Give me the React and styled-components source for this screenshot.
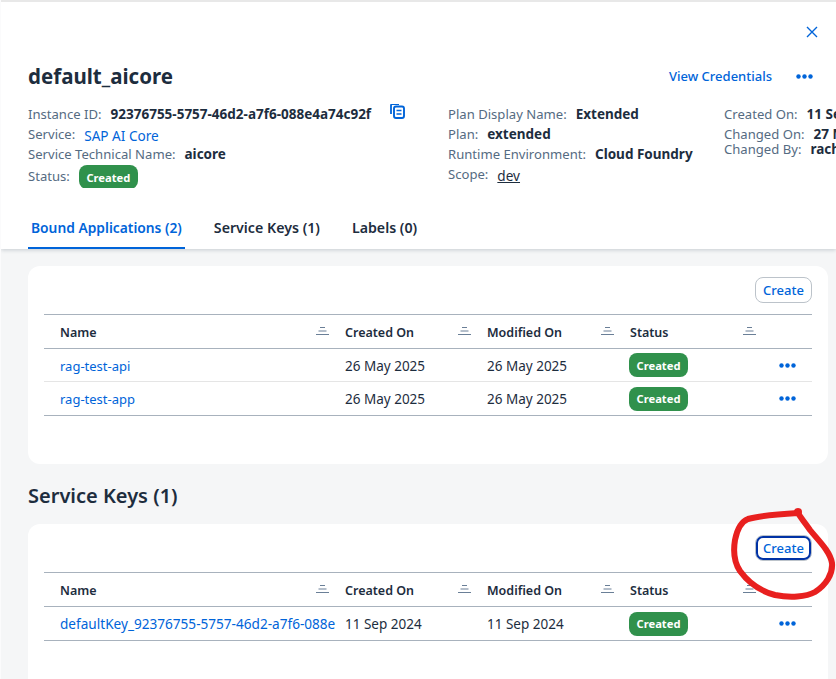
import React from "react"
import styled, { createGlobalStyle } from "styled-components"

const GlobalStyle = createGlobalStyle`
  html, body {
    margin: 0;
    padding: 0;
    background: #f5f6f7;
  }
  body {
    font-family: "Noto Sans", "Open Sans", Arial, sans-serif;
    color: #1d2d3e;
  }
`

const Page = styled.div`
  position: relative;
  width: 836px;
  height: 679px;
  overflow: hidden;
  background: #f5f6f7;
  box-sizing: border-box;
  border-left: 1px solid #fbfbfc;
`

const Header = styled.header`
  height: 249px;
  box-sizing: border-box;
  background: #fff;
  border-top: 2px solid #e8e8e8;
  box-shadow: 0 1px 4px rgba(34, 53, 72, 0.22);
  padding: 0 0 0 27px;
  display: flex;
  flex-direction: column;
`

const CloseRow = styled.div`
  height: 59px;
  padding: 24px 18px 0 0;
  box-sizing: border-box;
  display: flex;
  justify-content: flex-end;
`

const TitleRow = styled.div`
  display: flex;
  align-items: center;
  justify-content: space-between;
  height: 30px;
  padding-right: 23px;
`

const Title = styled.h1`
  margin: 0;
  font-size: 20.5px;
  font-weight: 700;
  color: #1d2d3e;
`

const TitleActions = styled.div`
  display: flex;
  align-items: center;
  gap: 24px;
`

const LinkButton = styled.a`
  font-size: 13px;
  font-weight: 500;
  color: #0064d9;
`

const MetaGrid = styled.div`
  display: grid;
  grid-template-columns: 420px 276px 1fr;
  margin-top: 13px;
  white-space: nowrap;
  overflow: hidden;
`

const MetaColumn = styled.div`
  display: flex;
  flex-direction: column;
`

const MetaRow = styled.div`
  height: ${p => p.$height || 20}px;
  display: flex;
  align-items: center;
  gap: ${p => p.$gap || 9}px;
  font-size: 13.1px;
`

const Label = styled.span`
  color: #556b82;
`

const Value = styled.span`
  color: #1d2d3e;
  font-weight: 700;
  font-size: 13.5px;
`

const MetaLink = styled.a`
  color: ${p => (p.$plain ? "#1d2d3e" : "#0064d9")};
  text-decoration: ${p => (p.$plain ? "underline" : "none")};
  font-size: 13.6px;
  padding-top: 3px;
`

const StatusPill = styled.span`
  display: inline-flex;
  align-items: center;
  justify-content: center;
  box-sizing: border-box;
  width: 59px;
  height: 24px;
  margin-top: ${p => p.$offset || 0}px;
  border-radius: 8px;
  background: #30914c;
  color: #fff;
  font-size: 11.2px;
  font-weight: 700;
`

const CopyButton = styled.span`
  display: inline-flex;
  margin-left: 10px;
  margin-top: -7px;
`

const Tabs = styled.nav`
  display: flex;
  margin-top: auto;
`

const Tab = styled.div`
  height: 43px;
  box-sizing: border-box;
  padding: 12px 3px 0;
  margin-right: 26px;
  font-size: ${p => (p.$active ? 13.8 : 14.2)}px;
  font-weight: 600;
  color: ${p => (p.$active ? "#0064d9" : "#1d2d3e")};
  border-bottom: 2px solid ${p => (p.$active ? "#0064d9" : "transparent")};
`

const Content = styled.main`
  padding: 17px 8px 0 27px;
`

const Card = styled.section`
  background: #fff;
  border-radius: 12px;
  padding: 11px 16px 0;
  height: ${p => p.$height}px;
  box-sizing: border-box;
`

const CardBar = styled.div`
  display: flex;
  justify-content: flex-end;
  height: 37px;
`

const CreateButton = styled.button`
  width: 57px;
  height: 26px;
  padding: 0;
  box-sizing: border-box;
  background: #fff;
  color: #0064d9;
  font: 500 13px "Noto Sans", sans-serif;
  border: 1px solid #bcc3ca;
  border-radius: 8px;
  ${p =>
    p.$focused &&
    `
    outline: 2px solid #0032a5;
    outline-offset: -3px;
  `}
`

const Row = styled.div`
  display: grid;
  grid-template-columns: 293px 142px 143px 142px 48px;
  align-items: center;
  height: ${p => (p.$head ? 35 : p.$line ? 33 : 34)}px;
  box-sizing: border-box;
  border-bottom: 1px solid ${p => (p.$line ? "#e5e5e5" : "#a8b2bd")};
  ${p => p.$head && "border-top: 1px solid #a8b2bd;"}
`

const HeadCell = styled.div`
  display: flex;
  align-items: center;
  justify-content: space-between;
  padding: 0 8px 0 16px;
  font-size: 12.5px;
  font-weight: 600;
  color: #1d2d3e;
`

const Cell = styled.div`
  padding-left: ${p => (p.$first ? 16 : 8)}px;
  font-size: ${p => (p.$first ? 13 : 13.5)}px;
  color: #1d2d3e;
  white-space: nowrap;
  overflow: hidden;
`

const TextCell = styled(Cell)`
  padding-top: ${p => (p.$line ? 2 : 0)}px;
`

const PillCell = styled.div`
  display: flex;
  padding-left: 7px;
`

const HeadName = styled.span`
  margin-left: ${p => (p.$first ? 0 : -8)}px;
  padding-top: 1px;
`

const NameLink = styled.a`
  color: #0064d9;
  font-size: ${p => (p.$long ? 13.6 : 13)}px;
`

const ActionCell = styled.div`
  display: flex;
  justify-content: center;
  padding-right: 1px;
`

const SectionTitle = styled.h2`
  margin: 20px 0 16px;
  height: 24px;
  line-height: 24px;
  font-size: 20px;
  font-weight: 600;
  color: #1d2d3e;
`

const Scribble = styled.svg`
  position: absolute;
  left: -1px;
  top: 0;
  pointer-events: none;
`

const SortIcon = () => (
  <svg width="13" height="9" viewBox="0 0 13 9">
    <path d="M4 .5h5M2.5 4h8M0 7.5h13" stroke="#6a7f97" strokeWidth="1" fill="none" />
  </svg>
)

const Dots = () => (
  <svg width="17" height="5" viewBox="0 0 17 5">
    <circle cx="2.5" cy="2.5" r="2.2" fill="#0064d9" />
    <circle cx="8.5" cy="2.5" r="2.2" fill="#0064d9" />
    <circle cx="14.5" cy="2.5" r="2.2" fill="#0064d9" />
  </svg>
)

const CloseIcon = () => (
  <svg width="12" height="12" viewBox="0 0 12 12">
    <path d="M1 1l10 10M11 1L1 11" stroke="#0064d9" strokeWidth="1.4" fill="none" />
  </svg>
)

const CopyIcon = () => (
  <svg width="15" height="16" viewBox="0 0 15 16" fill="none" stroke="#0064d9">
    <path d="M1 11V2.5Q1 1 2.5 1H9" strokeWidth="1.8" />
    <rect x="4" y="3.5" width="10" height="11.5" rx="2" strokeWidth="1.9" />
    <path d="M6.5 7.5h5M6.5 11h5" strokeWidth="1.7" />
  </svg>
)

const TableHead = () => (
  <Row $head>
    {["Name", "Created On", "Modified On", "Status"].map((name, i) => (
      <HeadCell key={name}>
        <HeadName $first={i === 0}>{name}</HeadName>
        <SortIcon />
      </HeadCell>
    ))}
    <div />
  </Row>
)

const TableRow = ({ name, created, modified, line, long }) => (
  <Row $line={line}>
    <TextCell $first $line={line}>
      <NameLink $long={long}>{name}</NameLink>
    </TextCell>
    <TextCell $line={line}>{created}</TextCell>
    <TextCell $line={line}>{modified}</TextCell>
    <PillCell>
      <StatusPill>Created</StatusPill>
    </PillCell>
    <ActionCell>
      <Dots />
    </ActionCell>
  </Row>
)

const App = () => {
  return (
    <Page>
      <GlobalStyle />
      <Header>
        <CloseRow>
          <CloseIcon />
        </CloseRow>
        <TitleRow>
          <Title>default_aicore</Title>
          <TitleActions>
            <LinkButton>View Credentials</LinkButton>
            <Dots />
          </TitleActions>
        </TitleRow>
        <MetaGrid>
          <MetaColumn>
            <MetaRow>
              <Label>Instance ID:</Label>
              <Value>92376755-5757-46d2-a7f6-088e4a74c92f</Value>
              <CopyButton>
                <CopyIcon />
              </CopyButton>
            </MetaRow>
            <MetaRow>
              <Label>Service:</Label>
              <MetaLink>SAP AI Core</MetaLink>
            </MetaRow>
            <MetaRow>
              <Label>Service Technical Name:</Label>
              <Value>aicore</Value>
            </MetaRow>
            <MetaRow $height={24}>
              <Label>Status:</Label>
              <StatusPill $offset={2}>Created</StatusPill>
            </MetaRow>
          </MetaColumn>
          <MetaColumn>
            <MetaRow>
              <Label>Plan Display Name:</Label>
              <Value>Extended</Value>
            </MetaRow>
            <MetaRow>
              <Label>Plan:</Label>
              <Value>extended</Value>
            </MetaRow>
            <MetaRow>
              <Label>Runtime Environment:</Label>
              <Value>Cloud Foundry</Value>
            </MetaRow>
            <MetaRow>
              <Label>Scope:</Label>
              <MetaLink $plain>dev</MetaLink>
            </MetaRow>
          </MetaColumn>
          <MetaColumn>
            <MetaRow>
              <Label>Created On:</Label>
              <Value>11 Sep 2024</Value>
            </MetaRow>
            <MetaRow>
              <Label>Changed On:</Label>
              <Value>27 May 2025</Value>
            </MetaRow>
            <MetaRow $height={10}>
              <Label>Changed By:</Label>
              <Value>rachel</Value>
            </MetaRow>
          </MetaColumn>
        </MetaGrid>
        <Tabs>
          <Tab $active>Bound Applications (2)</Tab>
          <Tab>Service Keys (1)</Tab>
          <Tab>Labels (0)</Tab>
        </Tabs>
      </Header>
      <Content>
        <Card $height={198}>
          <CardBar>
            <CreateButton>Create</CreateButton>
          </CardBar>
          <TableHead />
          <TableRow name="rag-test-api" created="26 May 2025" modified="26 May 2025" line />
          <TableRow name="rag-test-app" created="26 May 2025" modified="26 May 2025" />
        </Card>
        <SectionTitle>Service Keys (1)</SectionTitle>
        <Card $height={198}>
          <CardBar>
            <CreateButton $focused>Create</CreateButton>
          </CardBar>
          <TableHead />
          <TableRow name="defaultKey_92376755-5757-46d2-a7f6-088e" created="11 Sep 2024" modified="11 Sep 2024" long />
        </Card>
      </Content>
      <Scribble width="836" height="679" viewBox="0 0 836 679">
        <path
          d="M798 513C780 514 762 515 748 519C740 522 737 530 735 540C733 552 734 562 740 571C748 582 760 591 775 595C790 598 806 597 815 592C826 585 833 574 832 563C830 551 818 540 810 530C805 523 801 518 798 513Z"
          fill="none"
          stroke="#e8201f"
          strokeWidth="6"
          strokeLinejoin="round"
        />
        <circle cx="798" cy="512" r="4" fill="#e8201f" />
      </Scribble>
    </Page>
  )
}

export default App
